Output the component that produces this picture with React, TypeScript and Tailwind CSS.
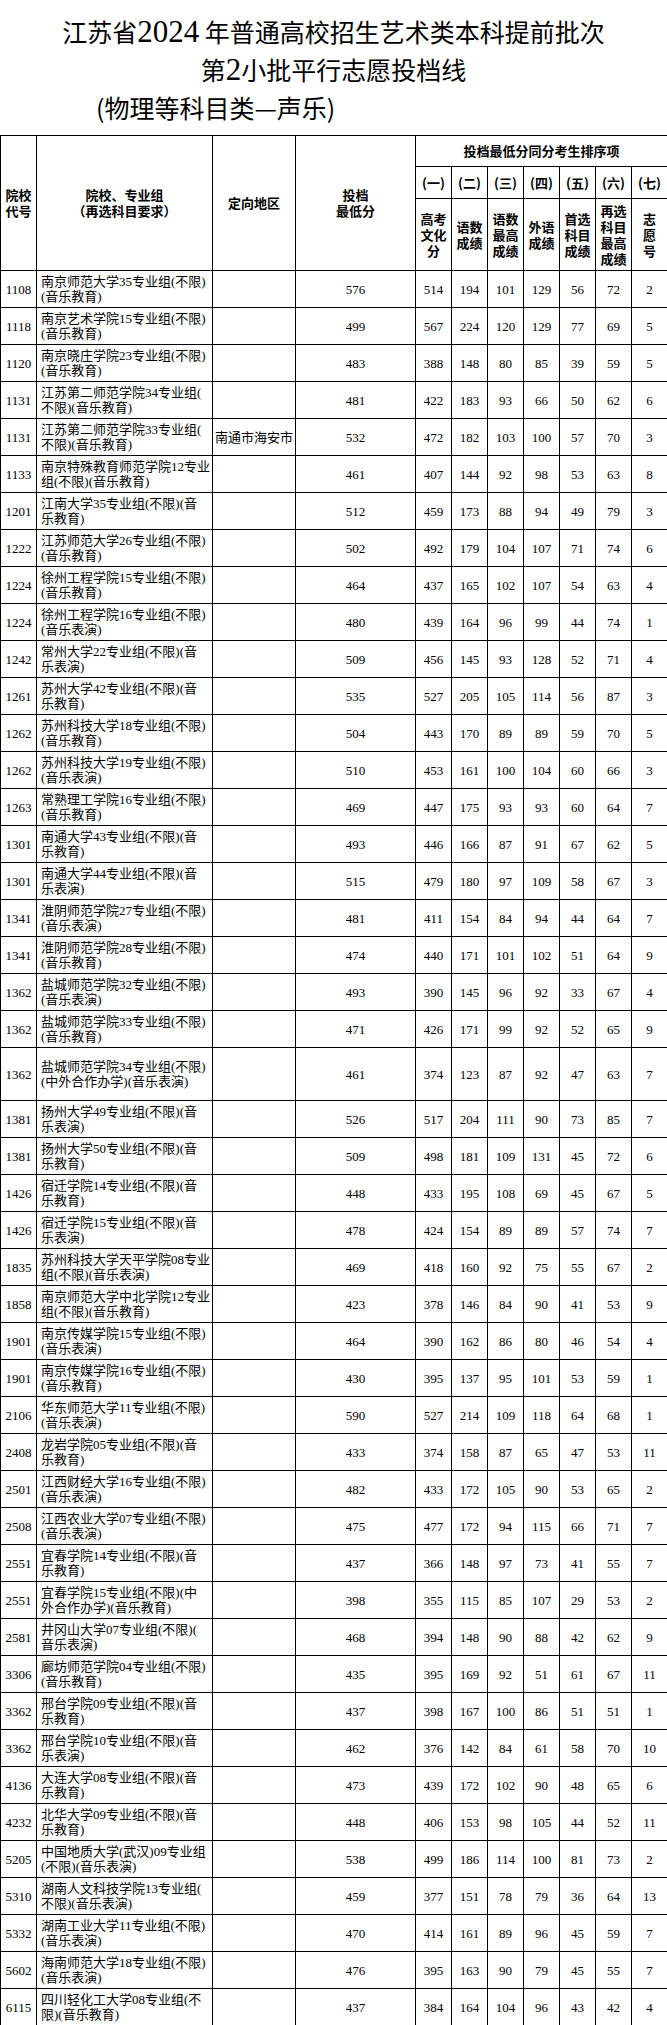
import React from 'react';

type Row = {
  code: string;
  l1: string;
  l2: string;
  region?: string;
  score: string;
  v: string[];
  tall?: boolean;
};

const raw: [string, string, string, string, string, string, boolean?][] = [
  ['1108', '南京师范大学35专业组(不限)', '(音乐教育)', '', '576', '514 194 101 129 56 72 2'],
  ['1118', '南京艺术学院15专业组(不限)', '(音乐教育)', '', '499', '567 224 120 129 77 69 5'],
  ['1120', '南京晓庄学院23专业组(不限)', '(音乐教育)', '', '483', '388 148 80 85 39 59 5'],
  ['1131', '江苏第二师范学院34专业组(', '不限)(音乐教育)', '', '481', '422 183 93 66 50 62 6'],
  ['1131', '江苏第二师范学院33专业组(', '不限)(音乐教育)', '南通市海安市', '532', '472 182 103 100 57 70 3'],
  ['1133', '南京特殊教育师范学院12专业', '组(不限)(音乐教育)', '', '461', '407 144 92 98 53 63 8'],
  ['1201', '江南大学35专业组(不限)(音', '乐教育)', '', '512', '459 173 88 94 49 79 3'],
  ['1222', '江苏师范大学26专业组(不限)', '(音乐教育)', '', '502', '492 179 104 107 71 74 6'],
  ['1224', '徐州工程学院15专业组(不限)', '(音乐教育)', '', '464', '437 165 102 107 54 63 4'],
  ['1224', '徐州工程学院16专业组(不限)', '(音乐表演)', '', '480', '439 164 96 99 44 74 1'],
  ['1242', '常州大学22专业组(不限)(音', '乐表演)', '', '509', '456 145 93 128 52 71 4'],
  ['1261', '苏州大学42专业组(不限)(音', '乐教育)', '', '535', '527 205 105 114 56 87 3'],
  ['1262', '苏州科技大学18专业组(不限)', '(音乐教育)', '', '504', '443 170 89 89 59 70 5'],
  ['1262', '苏州科技大学19专业组(不限)', '(音乐表演)', '', '510', '453 161 100 104 60 66 3'],
  ['1263', '常熟理工学院16专业组(不限)', '(音乐教育)', '', '469', '447 175 93 93 60 64 7'],
  ['1301', '南通大学43专业组(不限)(音', '乐教育)', '', '493', '446 166 87 91 67 62 5'],
  ['1301', '南通大学44专业组(不限)(音', '乐表演)', '', '515', '479 180 97 109 58 67 3'],
  ['1341', '淮阴师范学院27专业组(不限)', '(音乐表演)', '', '481', '411 154 84 94 44 64 7'],
  ['1341', '淮阴师范学院28专业组(不限)', '(音乐教育)', '', '474', '440 171 101 102 51 64 9'],
  ['1362', '盐城师范学院32专业组(不限)', '(音乐表演)', '', '493', '390 145 96 92 33 67 4'],
  ['1362', '盐城师范学院33专业组(不限)', '(音乐教育)', '', '471', '426 171 99 92 52 65 9'],
  ['1362', '盐城师范学院34专业组(不限)', '(中外合作办学)(音乐表演)', '', '461', '374 123 87 92 47 63 7', true],
  ['1381', '扬州大学49专业组(不限)(音', '乐表演)', '', '526', '517 204 111 90 73 85 7'],
  ['1381', '扬州大学50专业组(不限)(音', '乐教育)', '', '509', '498 181 109 131 45 72 6'],
  ['1426', '宿迁学院14专业组(不限)(音', '乐教育)', '', '448', '433 195 108 69 45 67 5'],
  ['1426', '宿迁学院15专业组(不限)(音', '乐表演)', '', '478', '424 154 89 89 57 74 7'],
  ['1835', '苏州科技大学天平学院08专业', '组(不限)(音乐表演)', '', '469', '418 160 92 75 55 67 2'],
  ['1858', '南京师范大学中北学院12专业', '组(不限)(音乐教育)', '', '423', '378 146 84 90 41 53 9'],
  ['1901', '南京传媒学院15专业组(不限)', '(音乐表演)', '', '464', '390 162 86 80 46 54 4'],
  ['1901', '南京传媒学院16专业组(不限)', '(音乐教育)', '', '430', '395 137 95 101 53 59 1'],
  ['2106', '华东师范大学11专业组(不限)', '(音乐表演)', '', '590', '527 214 109 118 64 68 1'],
  ['2408', '龙岩学院05专业组(不限)(音', '乐教育)', '', '433', '374 158 87 65 47 53 11'],
  ['2501', '江西财经大学16专业组(不限)', '(音乐表演)', '', '482', '433 172 105 90 53 65 2'],
  ['2508', '江西农业大学07专业组(不限)', '(音乐表演)', '', '475', '477 172 94 115 66 71 7'],
  ['2551', '宜春学院14专业组(不限)(音', '乐教育)', '', '437', '366 148 97 73 41 55 7'],
  ['2551', '宜春学院15专业组(不限)(中', '外合作办学)(音乐教育)', '', '398', '355 115 85 107 29 53 2'],
  ['2581', '井冈山大学07专业组(不限)(', '音乐表演)', '', '468', '394 148 90 88 42 62 9'],
  ['3306', '廊坊师范学院04专业组(不限)', '(音乐教育)', '', '435', '395 169 92 51 61 67 11'],
  ['3362', '邢台学院09专业组(不限)(音', '乐教育)', '', '437', '398 167 100 86 51 51 1'],
  ['3362', '邢台学院10专业组(不限)(音', '乐表演)', '', '462', '376 142 84 61 58 70 10'],
  ['4136', '大连大学08专业组(不限)(音', '乐教育)', '', '473', '439 172 102 90 48 65 6'],
  ['4232', '北华大学09专业组(不限)(音', '乐教育)', '', '448', '406 153 98 105 44 52 11'],
  ['5205', '中国地质大学(武汉)09专业组', '(不限)(音乐表演)', '', '538', '499 186 114 100 81 73 2'],
  ['5310', '湖南人文科技学院13专业组(', '不限)(音乐表演)', '', '459', '377 151 78 79 36 64 13'],
  ['5332', '湖南工业大学11专业组(不限)', '(音乐表演)', '', '470', '414 161 89 96 45 59 7'],
  ['5602', '海南师范大学18专业组(不限)', '(音乐表演)', '', '476', '395 163 90 79 45 55 7'],
  ['6115', '四川轻化工大学08专业组(不', '限)(音乐教育)', '', '437', '384 164 104 96 43 42 4'],
];

const rows: Row[] = raw.map((r) => ({
  code: r[0],
  l1: r[1],
  l2: r[2],
  region: r[3],
  score: r[4],
  v: r[5].split(' '),
  tall: !!r[6],
}));

const cell = 'border border-black p-0 text-center align-middle';
const hcell = 'border border-black p-0 text-center align-middle font-bold';

const subLabels: string[][] = [
  ['高考', '文化', '分'],
  ['语数', '成绩'],
  ['语数', '最高', '成绩'],
  ['外语', '成绩'],
  ['首选', '科目', '成绩'],
  ['再选', '科目', '最高', '成绩'],
  ['志', '愿', '号'],
];

const nums = ['(一)', '(二)', '(三)', '(四)', '(五)', '(六)', '(七)'];

export default function App() {
  return (
    <div className="w-[667px] bg-white text-black">
      <div className="pt-[12px] pb-[9px] [font-family:Noto_Sans_CJK_SC,sans-serif] text-[25px]">
        <div className="h-[38px] leading-[38px] text-center whitespace-nowrap">
          江苏省<span className="[font-family:Liberation_Serif,serif] text-[31px]">2024</span> 年普通高校招生艺术类本科提前批次
        </div>
        <div className="h-[38px] leading-[38px] text-center whitespace-nowrap">
          第<span className="[font-family:Liberation_Serif,serif] text-[31px]">2</span>小批平行志愿投档线
        </div>
        <div className="h-[38px] leading-[38px] pl-[96px] whitespace-nowrap">(物理等科目类—声乐)</div>
      </div>
      <table className="table-fixed border-collapse w-[667px] [font-family:Liberation_Serif,Noto_Sans_CJK_SC,serif] text-[13px]">
        <colgroup>
          <col className="w-[36px]" />
          <col className="w-[176px]" />
          <col className="w-[83px]" />
          <col className="w-[120px]" />
          <col className="w-[36px]" />
          <col className="w-[36px]" />
          <col className="w-[36px]" />
          <col className="w-[36px]" />
          <col className="w-[36px]" />
          <col className="w-[36px]" />
          <col className="w-[36px]" />
        </colgroup>
        <thead className="[font-family:Noto_Sans_CJK_SC,sans-serif] text-[13px] leading-[16px]">
          <tr className="h-[31px]">
            <th rowSpan={3} className={hcell}>
              院校
              <br />
              代号
            </th>
            <th rowSpan={3} className={hcell}>
              院校、专业组
              <br />
              （再选科目要求）
            </th>
            <th rowSpan={3} className={hcell}>
              定向地区
            </th>
            <th rowSpan={3} className={hcell}>
              投档
              <br />
              最低分
            </th>
            <th colSpan={7} className={hcell}>
              投档最低分同分考生排序项
            </th>
          </tr>
          <tr className="h-[32px]">
            {nums.map((n) => (
              <th key={n} className={hcell + ' whitespace-nowrap'}>
                {n}
              </th>
            ))}
          </tr>
          <tr className="h-[72px]">
            {subLabels.map((ls, i) => (
              <th key={i} className={hcell}>
                {ls.map((l, j) => (
                  <div key={j}>{l}</div>
                ))}
              </th>
            ))}
          </tr>
        </thead>
        <tbody className="leading-[15px]">
          {rows.map((r, i) => (
            <tr key={i} className={r.tall ? 'h-[53px]' : 'h-[37px]'}>
              <td className={cell}>{r.code}</td>
              <td className="border border-black py-0 pl-[4px] pr-0 text-left align-middle whitespace-nowrap overflow-hidden">
                <div>{r.l1}</div>
                <div>{r.l2}</div>
              </td>
              <td className={cell + ' whitespace-nowrap'}>{r.region}</td>
              <td className={cell}>{r.score}</td>
              {r.v.map((x, j) => (
                <td key={j} className={cell}>
                  {x}
                </td>
              ))}
            </tr>
          ))}
        </tbody>
      </table>
    </div>
  );
}
